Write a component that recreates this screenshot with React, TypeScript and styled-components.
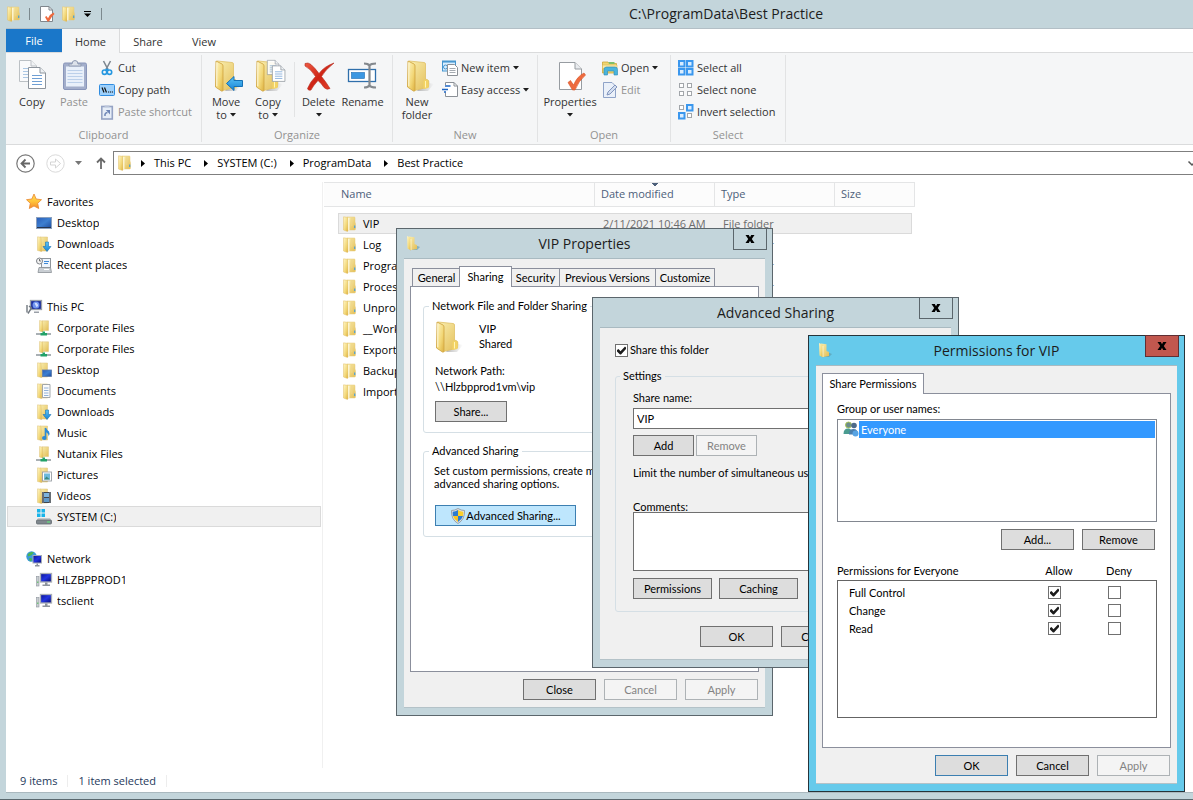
import React, { useState } from "react";
import styled, { createGlobalStyle, css } from "styled-components";

const UI = `"Open Sans", "Noto Sans", sans-serif`;
const DIALOG = `Lato, "Liberation Sans", sans-serif`;

const GlobalStyle = createGlobalStyle`
  *, *::before, *::after { box-sizing: border-box; }
  body { margin: 0; font: 11px/14px ${UI}; color: #000; background: #fff; }
  button, input, textarea { font: inherit; color: inherit; margin: 0; }
  svg { display: block; flex: none; overflow: visible; }
`;

/* ---------- icons ---------- */

const Gradients = () => (
  <svg width="0" height="0" aria-hidden="true">
    <defs>
      <linearGradient id="foldBack" x1="0" y1="0" x2="1" y2="1">
        <stop offset="0" stopColor="#f9eeb0" />
        <stop offset="1" stopColor="#e3bd55" />
      </linearGradient>
      <linearGradient id="foldFront" x1="0" y1="0" x2="1" y2="1">
        <stop offset="0" stopColor="#fff6c6" />
        <stop offset="0.6" stopColor="#f2d777" />
        <stop offset="1" stopColor="#dcaf3e" />
      </linearGradient>
      <linearGradient id="screen" x1="0" y1="0" x2="1" y2="1">
        <stop offset="0" stopColor="#2a5cb8" />
        <stop offset="0.5" stopColor="#3d7fd0" />
        <stop offset="1" stopColor="#1d4a9c" />
      </linearGradient>
      <linearGradient id="deepScreen" x1="0" y1="0" x2="1" y2="1">
        <stop offset="0" stopColor="#0a1290" />
        <stop offset="0.5" stopColor="#2233e0" />
        <stop offset="1" stopColor="#060a70" />
      </linearGradient>
      <linearGradient id="blueArrow" x1="0" y1="0" x2="0" y2="1">
        <stop offset="0" stopColor="#5cc4f6" />
        <stop offset="1" stopColor="#1583d6" />
      </linearGradient>
      <linearGradient id="redX" x1="0" y1="0" x2="1" y2="1">
        <stop offset="0" stopColor="#ee5a43" />
        <stop offset="0.5" stopColor="#cf2415" />
        <stop offset="1" stopColor="#e4432c" />
      </linearGradient>
      <linearGradient id="starFill" x1="0" y1="0" x2="0" y2="1">
        <stop offset="0" stopColor="#ffd75c" />
        <stop offset="0.5" stopColor="#ffc63a" />
        <stop offset="1" stopColor="#f58a2c" />
      </linearGradient>
      <linearGradient id="softShadow" x1="0" y1="0" x2="1" y2="0">
        <stop offset="0" stopColor="#777" stopOpacity="0.5" />
        <stop offset="1" stopColor="#777" stopOpacity="0" />
      </linearGradient>
    </defs>
  </svg>
);

const BigFolderShape = ({ x = 0 }: { x?: number }) => (
  <g transform={`translate(${x} 0)`}>
    <path d="M18 22L28 24L22 31L11 31Z" fill="url(#softShadow)" />
    <path d="M3 1L18 2.500Q19.500 2.600 19.500 4L19.500 19L22 20Q22.800 20.500 22.800 22L22.500 27L8.500 30.500L3 27Z" fill="url(#foldBack)" stroke="#e0c066" strokeWidth="0.800" />
    <path d="M17.500 21Q20 19 22 20.500Q23 24 22.500 28L17.500 29Z" fill="#f3d364" />
    <path d="M19.500 21V27.500" stroke="#fff3b8" strokeWidth="1" />
    <path d="M2 1L8 4Q9 4.500 9 6L9 30Q9 31.500 7.500 31L1.500 27Z" fill="url(#foldFront)" stroke="#d3a846" strokeWidth="0.900" />
    <path d="M2.800 2.500V26" stroke="#fffbe0" strokeWidth="0.900" />
  </g>
);

const Icon32 = ({ children, size = 32 }: { children: React.ReactNode; size?: number }) => (
  <svg width={size} height={size} viewBox="0 0 32 32" fill="none" aria-hidden="true">{children}</svg>
);
const Icon16 = ({ children }: { children: React.ReactNode }) => (
  <svg width="16" height="16" viewBox="0 0 16 16" fill="none" aria-hidden="true">{children}</svg>
);

const BigFolder = ({ x }: { x?: number }) => <Icon32><BigFolderShape x={x} /></Icon32>;

const SmallFolder = () => (
  <Icon16>
    <path d="M5 1H12.500Q13 1 13 2V6L13.500 8V13Q13.500 14 12.500 14H5Z" fill="url(#foldBack)" stroke="#e6c878" strokeWidth="0.5" />
    <path d="M1.500 0.800L5.500 1.300L6 14.500L5.500 15.500L1.500 14Z" fill="url(#foldFront)" stroke="#e0bf68" strokeWidth="0.5" />
    <path d="M6.800 2V14.500" stroke="#fffbe2" strokeWidth="1.200" />
    <path d="M9.800 1.500V10" stroke="#efd68a" strokeWidth="1" />
    <path d="M12.700 9.500V12" stroke="#4b9fd8" strokeWidth="1.200" />
  </Icon16>
);

const TitleFolder = () => (
  <Icon16>
    <path d="M10 10L15 12L12 15H6Z" fill="#5b98a8" opacity="0.6" />
    <path d="M4 1.500L9.500 2.200V9L12 10V14L6 15Z" fill="url(#foldBack)" />
    <path d="M2 1L5.500 2.500L6 15.500L2.500 13.500Z" fill="url(#foldFront)" />
    <path d="M6 4V15" stroke="#fff6d0" strokeWidth="0.8" />
  </Icon16>
);

const HalfFolder = () => (
  <g>
    <path d="M4 1H11.500V15H4Z" fill="url(#foldBack)" stroke="#ddc078" strokeWidth="0.5" />
    <path d="M1.500 0.800L5 1.300L5.800 15.500L1.500 14.500Z" fill="url(#foldFront)" stroke="#ddc078" strokeWidth="0.5" />
  </g>
);

const Page = ({ x, y }: { x: number; y: number }) => (
  <g transform={`translate(${x} ${y})`}>
    <path d="M0.500 0.500H12L17.500 6V21.500H0.500Z" fill="#fff" stroke="#8d949c" />
    <path d="M12 0.500V6H17.500" fill="#eef1f4" stroke="#8d949c" />
    <path d="M4 8.500H14M4 11.500H14M4 14.500H14M4 17.500H14" stroke="#6f9fd4" />
  </g>
);

const CopyIcon = () => (
  <Icon32>
    <g opacity="0.55"><Page x={3} y={0} /></g>
    <Page x={12} y={7} />
  </Icon32>
);

const PasteIcon = () => (
  <Icon32>
    <rect x="5.500" y="3" width="23" height="26.500" rx="1.500" fill="#a3aecb" stroke="#8996ba" />
    <rect x="8" y="6.500" width="18" height="20" fill="#e9f0fa" />
    <path d="M9.500 10.500H24.500M9.500 13.500H24.500M9.500 16.500H24.500M9.500 19.500H24.500M9.500 22.500H24.500" stroke="#bcd0ea" />
    <path d="M11 6V4H14Q14 0.500 17 0.500T20 4H23V6Z" fill="#dde2ea" stroke="#8f9bb2" />
  </Icon32>
);

const CutIcon = () => (
  <Icon16>
    <path d="M4.500 1L9 9.500M11.500 1L7 9.500" stroke="#7d8790" strokeWidth="1.600" />
    <circle cx="5.500" cy="12.200" r="2.200" stroke="#2597e0" strokeWidth="1.600" />
    <circle cx="10.500" cy="12.200" r="2.200" stroke="#2597e0" strokeWidth="1.600" />
    <path d="M6.500 9.500L9.500 9.500" stroke="#2597e0" strokeWidth="1.500" />
  </Icon16>
);

const CopyPathIcon = () => (
  <Icon16>
    <rect x="0.500" y="2.500" width="15" height="11" rx="1" fill="#9dd0fb" stroke="#2f8ce0" />
    <path d="M3 5.500L5 10.500M5.500 5.500L7.500 10.500" stroke="#111" strokeWidth="1.200" />
    <path d="M9 10H10.200M11 10H12.200M13 10H14" stroke="#111" strokeWidth="1.200" />
  </Icon16>
);

const PasteShortcutIcon = () => (
  <Icon16>
    <rect x="2.800" y="2.500" width="10.500" height="12.500" fill="#e6edf7" stroke="#95a3c4" strokeWidth="1.600" />
    <path d="M5.500 3.200V1.500H10.500V3.200Z" fill="#b9c3d8" />
    <path d="M6 12Q5.500 9 8.500 8.500" stroke="#6c84b5" strokeWidth="1.500" />
    <path d="M6.800 6H11V10.500Z" fill="#6c84b5" />
  </Icon16>
);

const MoveToIcon = () => (
  <Icon32>
    <BigFolderShape x={4} />
    <path d="M16.500 23.500L24 16.500V20.500H32.500V26.500H24V30.500Z" fill="url(#blueArrow)" stroke="#1570b5" />
  </Icon32>
);

const CopyToIcon = () => (
  <Icon32>
    <BigFolderShape x={3} />
    <g transform="translate(15 0) scale(0.680)" opacity="0.9"><Page x={0} y={0} /></g>
    <g transform="translate(20 5.500) scale(0.740)"><Page x={0} y={0} /></g>
  </Icon32>
);

const DeleteIcon = () => (
  <Icon32>
    <path d="M2 3.500Q5 2 8 4.500Q12 8 16 13.500Q21 6.500 31 3Q22 10 18.500 16.500Q23 22 27 28.500Q24 30.500 21 27.500Q18 23 15 20.500Q10 26 8 30Q5 31 4.500 28.500Q7 22 12.500 16.500Q8 9 2 6Z" fill="url(#redX)" stroke="#b52a1c" strokeWidth="0.6" />
  </Icon32>
);

const RenameIcon = () => (
  <Icon32>
    <rect x="1.500" y="9.500" width="27" height="12" fill="#fff" stroke="#2f6fab" strokeWidth="1.300" />
    <rect x="4.500" y="12.500" width="13" height="6" fill="#3b97e2" stroke="#1c6cb4" strokeWidth="0.600" />
    <path d="M17 3.500Q21 3.500 22.500 5.500Q24 3.500 29 3.500M17 27.500Q21 27.500 22.500 25.500Q24 27.500 29 27.500M22.500 5V26" stroke="#84898e" strokeWidth="2.200" />
  </Icon32>
);

const NewItemIcon = () => (
  <Icon16>
    <rect x="0.500" y="1" width="13" height="10" fill="#d9efff" stroke="#4495cf" />
    <path d="M1 1.800H13" stroke="#4495cf" strokeWidth="1.500" />
    <circle cx="3.500" cy="7" r="2" stroke="#4495cf" />
    <path d="M5.500 4.500H12.500L15.500 7.500V15.500H5.500Z" fill="#fff" stroke="#8b9096" />
    <path d="M7.500 8.500H13.500M7.500 10.500H13.500M7.500 12.500H13.500" stroke="#a5abb1" />
  </Icon16>
);

const EasyAccessIcon = () => (
  <Icon16>
    <path d="M3.500 0.500H12L15.500 4V14.500H3.500Z" fill="#fff" />
    <path d="M3.500 3V0.500H12L15.500 4V14.500H3.500V10.500" stroke="#8b9096" />
    <path d="M12 0.500V4H15.500" stroke="#8b9096" />
    <path d="M3 4H8.500M0 7.500H6M2 10H4" stroke="#1e66c4" strokeWidth="1.500" />
  </Icon16>
);

const PropertiesIcon = () => (
  <Icon32>
    <path d="M5.500 2.500H21L27.500 9V29.500H5.500Z" fill="#fff" stroke="#979ca1" />
    <path d="M21 2.500V9H27.500" fill="#e9ecef" stroke="#979ca1" />
    <path d="M14 22.500L16.500 20.500L19.500 25Q23.500 16 30 13L31.500 15Q24.500 21 21 30H18.500Z" fill="#ee6b3f" stroke="#d65324" strokeWidth="0.6" />
  </Icon32>
);

const QuickProperties = () => (
  <Icon16>
    <path d="M1.500 0.500H10L13.500 4V15.500H1.500Z" fill="#fff" stroke="#7f868c" />
    <path d="M10 0.500V4H13.500" stroke="#7f868c" />
    <path d="M6 11L7.500 10L9 12.200Q11 8 14.500 6.500L15.500 8Q12 11 10 15.500H8.500Z" fill="#ee6b3f" />
  </Icon16>
);

const OpenIcon = () => (
  <Icon16>
    <path d="M0.500 2H6L7 3.500H14.500V13H0.500Z" fill="#f0d670" stroke="#cda63a" strokeWidth="0.8" />
    <path d="M6.500 2H12.500V4H7Z" fill="#7fbf6a" />
    <path d="M0.500 5H15V8.500H0.500Z" fill="#f9e9a6" stroke="#d9b858" strokeWidth="0.600" />
    <path d="M2 15V9.500Q2 7 4.500 7H13Q15.500 7 15.500 9.500V15H12V11H5.500V15Z" fill="#4ab4dc" stroke="#2a8ab5" strokeWidth="0.6" />
  </Icon16>
);

const EditIcon = () => (
  <Icon16>
    <path d="M1.500 0.500H10L13.500 4V15.500H1.500Z" fill="#eaf0f9" stroke="#8fa3c8" />
    <path d="M5 13L6 10L13 3L15 5L8 12Z" fill="#d3def0" stroke="#8295bd" />
  </Icon16>
);

const Square = ({ x, y, on }: { x: number; y: number; on?: boolean }) =>
  on ? (
    <g>
      <rect x={x} y={y} width="7.500" height="7.500" fill="#3a97ee" />
      <rect x={x + 2} y={y + 2} width="3.500" height="3.500" fill="#d9edff" />
    </g>
  ) : (
    <rect x={x + 1.5} y={y + 1.5} width="4" height="4" fill="#fff" stroke="#a2a6aa" />
  );

const SelectIcon = ({ on }: { on: boolean[] }) => (
  <Icon16>
    <Square x={0} y={0} on={on[0]} />
    <Square x={8} y={0} on={on[1]} />
    <Square x={0} y={8} on={on[2]} />
    <Square x={8} y={8} on={on[3]} />
  </Icon16>
);

const StarIcon = () => (
  <Icon16>
    <path d="M8 0L10.200 5L15.500 5.700L11.700 9.300L12.700 14.500L8 12L3.300 14.500L4.300 9.300L0.500 5.700L5.800 5Z" fill="url(#starFill)" stroke="#e8862e" strokeWidth="0.8" />
  </Icon16>
);

const DesktopIcon = () => (
  <Icon16>
    <rect x="0.500" y="2.500" width="15" height="11" fill="url(#screen)" stroke="#8ba0bd" />
    <path d="M1 12.500H15" stroke="#26344d" />
  </Icon16>
);

const DownloadsIcon = () => (
  <Icon16>
    <HalfFolder />
    <path d="M9.500 6H12.500V10.500H15L11 15.500L7 10.500H9.500Z" fill="url(#blueArrow)" stroke="#1a72b4" strokeWidth="0.6" />
  </Icon16>
);

const RecentIcon = () => (
  <Icon16>
    <rect x="5.500" y="1.500" width="9" height="9" fill="#eef4fb" stroke="#8f959b" />
    <path d="M8 4.500H13M8 6.500H12" stroke="#3c88d6" strokeWidth="1.200" />
    <circle cx="3.500" cy="4" r="3" fill="#f3f3f3" stroke="#7d8288" />
    <path d="M3.500 2V4H5" stroke="#555" strokeWidth="0.800" />
    <path d="M3 10.500H14.500L15.500 15.500H2Z" fill="#c9ced3" stroke="#8a9096" strokeWidth="0.800" />
    <path d="M8 12.500H13" stroke="#fff" />
  </Icon16>
);

const PcIcon = () => (
  <Icon16>
    <rect x="4.500" y="1.500" width="11" height="9" fill="#1a2c9c" stroke="#9aa0a8" strokeWidth="1.300" />
    <circle cx="10" cy="6" r="3.500" fill="#6f93ee" />
    <path d="M8.500 4.500Q10 3 11.500 5T10.500 8Z" fill="#cfdcff" />
    <path d="M8 12.500H13V14H8Z" fill="#9aa0a8" />
    <path d="M1 6V13.500M3 7L5.500 9L2 14.500" stroke="#70777f" strokeWidth="1.400" />
  </Icon16>
);

const NetFolderIcon = () => (
  <Icon16>
    <path d="M6 0.800H12.500V10.500H6Z" fill="url(#foldBack)" stroke="#ddc078" strokeWidth="0.500" />
    <path d="M3.500 0.500L6.500 1.200L7 12L3.500 11Z" fill="url(#foldFront)" stroke="#ddc078" strokeWidth="0.500" />
    <path d="M0 14H15" stroke="#a9b0b4" strokeWidth="2" />
    <path d="M6.500 11.500H9V13H11V15.500H4.500V13H6.500Z" fill="#22a268" />
  </Icon16>
);

const DesktopFolderIcon = () => (
  <Icon16><HalfFolder /><rect x="6.500" y="8" width="9" height="6.500" fill="url(#screen)" stroke="#5c7ba8" strokeWidth="0.8" /></Icon16>
);
const DocumentsIcon = () => (
  <Icon16>
    <HalfFolder />
    <path d="M6.500 1.500H14V14.500H6.500Z" fill="#fbfbfb" stroke="#9a9fa5" strokeWidth="0.9" />
    <path d="M8 5H12.500M8 7.500H12.500M8 10H12.500M8 12.500H12.500" stroke="#86a9d6" strokeWidth="0.9" />
  </Icon16>
);
const MusicIcon = () => (
  <Icon16>
    <HalfFolder />
    <path d="M9.500 3V12.500" stroke="#2b8ad8" strokeWidth="1.600" />
    <ellipse cx="8.300" cy="13" rx="2.300" ry="1.900" fill="#2b8ad8" />
    <path d="M9.500 2.500Q11 5 13 6.500Q14.500 9 12.500 11.500Q13 8.500 9.500 7Z" fill="#2b8ad8" />
  </Icon16>
);
const PicturesIcon = () => (
  <Icon16>
    <HalfFolder />
    <rect x="6.500" y="5" width="9" height="9" fill="#fff" stroke="#9a9fa5" strokeWidth="0.9" />
    <rect x="8" y="6.500" width="6" height="6" fill="#6db9dd" />
    <path d="M8 12.500L10.500 9.500L14 12.500Z" fill="#3b8a80" />
  </Icon16>
);
const VideosIcon = () => (
  <Icon16>
    <HalfFolder />
    <rect x="6" y="4" width="9" height="11" fill="#3f464d" />
    <rect x="8" y="5" width="5" height="4" fill="#7db4dd" />
    <rect x="8" y="10" width="5" height="4" fill="#5f98c8" />
    <path d="M7 4.500V15M14 4.500V15" stroke="#dfe3e6" strokeWidth="1" strokeDasharray="1 1" />
  </Icon16>
);
const DriveIcon = () => (
  <Icon16>
    <path d="M1 0H4.500V3.500H1ZM5.500 0H9V3.500H5.500ZM1 4.500H4.500V8H1ZM5.500 4.500H9V8H5.500Z" fill="#18b4ea" />
    <path d="M2 9H14L15.500 11.500H0.500Z" fill="#c3c8cc" />
    <rect x="0.500" y="11" width="15" height="4" rx="1" fill="#7f878d" stroke="#62696f" strokeWidth="0.800" />
    <path d="M11 13H14" stroke="#5fe07a" strokeWidth="1.200" />
  </Icon16>
);
const NetworkIcon = () => (
  <Icon16>
    <circle cx="5.500" cy="5.500" r="5.200" fill="#3a9ad9" />
    <path d="M2 3Q5 0 8 1.500Q6 4 3.500 5Q1 6 2 3ZM3 7.500Q6 6 6 9L4.500 10.500Q3 9.500 3 7.500Z" fill="#4bb54f" />
    <rect x="7" y="4.500" width="8.500" height="7.500" fill="url(#deepScreen)" stroke="#a3abb5" />
    <path d="M10.500 12.500H12V14H13.500V15.500H9V14H10.500Z" fill="#8d949c" />
  </Icon16>
);
const ComputerIcon = () => (
  <Icon16>
    <rect x="4.500" y="1.500" width="11" height="8.500" fill="url(#deepScreen)" stroke="#a9aeb5" strokeWidth="1.300" />
    <path d="M9 10.500H11.500V12.500H14V14H6.500V12.500H9Z" fill="#8d949c" />
    <rect x="0.500" y="4.500" width="2.500" height="9.500" fill="#c9cdd2" stroke="#8d949c" strokeWidth="0.600" />
    <path d="M1.800 9.500V11" stroke="#4ec455" />
  </Icon16>
);

const ShieldIcon = () => (
  <Icon16>
    <path d="M8 0.500Q11 2.500 14.500 2.500Q15 11.500 8 15.500Q1 11.500 1.500 2.500Q5 2.500 8 0.500Z" fill="#dfe3e6" stroke="#8b8f93" strokeWidth="0.8" />
    <path d="M8 2V8H3Q2.500 6 2.700 3.700Q5.500 3.500 8 2Z" fill="#2d7bd0" />
    <path d="M8 2V8H13Q13.500 6 13.300 3.700Q10.500 3.500 8 2Z" fill="#fbd02d" />
    <path d="M8 14V8H3Q4.200 11.800 8 14Z" fill="#fbc31e" />
    <path d="M8 14V8H13Q11.800 11.800 8 14Z" fill="#2d7bd0" />
  </Icon16>
);

const PeopleIcon = () => (
  <Icon16>
    <circle cx="5.500" cy="4" r="3" fill="#6d8c8b" stroke="#a9c64e" strokeWidth="0.9" />
    <path d="M0.500 13Q0.500 7.500 5 7.500T9 13Z" fill="#4b9c90" />
    <circle cx="11" cy="4.500" r="2.800" fill="#4e6b8a" />
    <path d="M6 13.500Q6 8 10.500 8T15 13.500Z" fill="#4b7fae" />
    <circle cx="12.500" cy="12.500" r="3" fill="#58a4e4" />
  </Icon16>
);

const Caret = ({ color = "#1e1e1e" }: { color?: string }) => (
  <svg width="6" height="4" viewBox="0 0 6 4" aria-hidden="true"><path d="M0 0H6L3 3.500Z" fill={color} /></svg>
);

const CloseGlyph = () => (
  <svg width="10" height="8" viewBox="0 0 10 8" aria-hidden="true">
    <path d="M0.500 0H3.800L5 2.200L6.200 0H9.500L6.800 4L9.500 8H6.200L5 5.800L3.800 8H0.500L3.200 4Z" fill="#000" />
  </svg>
);

/* ---------- explorer window ---------- */

const Desktop = styled.div`
  position: relative;
  min-height: 100vh;
  display: flex;
  flex-direction: column;
  overflow: hidden;
  padding: 0 0 6px 6px;
  background: #c3d5db;
  border-bottom: 1px solid #5a686e;
`;

const TitleBar = styled.header`
  display: flex;
  align-items: center;
  height: 28px;
`;

const QuickAccess = styled.div`
  flex: 0 0 253px;
  display: flex;
  align-items: center;
`;

const QuickButton = styled.button<{ $ml?: number }>`
  display: flex;
  border: 0;
  padding: 0;
  background: none;
  margin-left: ${(p) => p.$ml ?? 0}px;
`;

const QuickRule = styled.span<{ $ml: number }>`
  width: 1px;
  height: 12px;
  margin-left: ${(p) => p.$ml}px;
  background: #7c898e;
`;

const WindowTitle = styled.h1`
  flex: 1;
  margin: 0;
  text-align: center;
  font-size: 14px;
  line-height: 20px;
  font-weight: 400;
  color: #1c1c1c;
`;

const TabStrip = styled.nav`
  display: flex;
  height: 25px;
  background: #fff;
  border-top: 1px solid #b3bfc6;
  border-bottom: 1px solid #dadbdc;
`;

const RibbonTab = styled.button<{ $kind?: "file" | "active"; $w: number }>`
  width: ${(p) => p.$w}px;
  border: 0;
  padding: 2px 0 0;
  background: none;
  color: #333;
  ${(p) => p.$kind === "file" && css`background: #1a77c9; color: #fff; padding: 0;`}
  ${(p) => p.$kind === "active" && css`
    background: #f5f6f7;
    border-right: 1px solid #dadbdc;
    margin-bottom: -1px;
  `}
`;

const Ribbon = styled.section`
  display: flex;
  height: 92px;
  padding: 2px 0;
  background: #f5f6f7;
  border-bottom: 1px solid #dadbdc;
`;

const Group = styled.div<{ $w: number; $pad: number }>`
  flex: 0 0 ${(p) => p.$w}px;
  display: flex;
  flex-direction: column;
  padding-top: 2px;
  border-right: 1px solid #e2e3e4;
  > div { padding-left: ${(p) => p.$pad}px; }
`;

const GroupBody = styled.div`
  display: flex;
  height: 66px;
`;

const GroupLabel = styled.span`
  margin-top: 5px;
  text-align: center;
  color: #929292;
`;

const LargeButton = styled.button<{ $w: number }>`
  flex: 0 0 ${(p) => p.$w}px;
  display: flex;
  flex-direction: column;
  align-items: center;
  padding: 3px 0 0;
  border: 0;
  background: none;
  color: #333;
  &:disabled { color: #929292; }
`;

const LargeLabel = styled.span`
  margin-top: 3px;
  line-height: 13px;
  white-space: nowrap;
`;

const SecondLine = styled.span`
  display: flex;
  align-items: center;
  gap: 3px;
  height: 13px;
  line-height: 13px;
`;

const SmallColumn = styled.div`
  display: flex;
  flex-direction: column;
  padding-left: 4px;
`;

const SmallButton = styled.button`
  display: flex;
  align-items: center;
  gap: 3px;
  height: 22px;
  padding: 0;
  border: 0;
  background: none;
  color: #333;
  white-space: nowrap;
  &:disabled { color: #929292; }
`;

const InnerRule = styled.span`
  width: 1px;
  margin: 5px 2px 6px 5px;
  background: #e2e3e4;
`;

const AddressRow = styled.div`
  display: flex;
  align-items: center;
  height: 37px;
  padding: 0 0 1px 10px;
  background: #fff;
`;

const PlainButton = styled.button<{ $mr: number }>`
  display: flex;
  padding: 0;
  border: 0;
  background: none;
  margin-right: ${(p) => p.$mr}px;
`;

const AddressBox = styled.div`
  flex: 1;
  display: flex;
  align-items: center;
  height: 24px;
  padding-left: 3px;
  border: 1px solid #7f7f7f;
  border-right: 0;
`;

const Crumb = styled.a`
  display: flex;
  align-items: center;
  gap: 9px;
  margin-left: 8px;
  color: #000;
  text-decoration: none;
  & + & { margin-left: 13px; }
`;

const AddressChevron = styled.svg`
  margin-left: auto;
  margin-right: -3px;
`;

const Body = styled.div`
  flex: 1;
  display: flex;
  background: #fff;
`;

const NavPane = styled.nav`
  flex: 0 0 317px;
  padding: 9px 1px 0;
  border-right: 1px solid #f0f0f0;
`;

const NavSection = styled.section`
  margin-bottom: 21px;
`;

const NavItem = styled.a<{ $top?: boolean; $active?: boolean; $clip?: boolean }>`
  display: flex;
  align-items: center;
  gap: 5px;
  height: 21px;
  padding-left: ${(p) => (p.$top ? 18 : 28)}px;
  border: 1px solid ${(p) => (p.$active ? "#dadada" : "transparent")};
  background: ${(p) => (p.$active ? "#f0f0f0" : "none")};
  color: #000;
  text-decoration: none;
  span { overflow: hidden; white-space: nowrap; ${(p) => p.$clip && "width: 68px;"} }
`;

const FileTable = styled.table`
  display: block;
  flex: 1;
  min-width: 0;
  thead { display: block; }
  tr {
    display: grid;
    grid-template-columns: 271px 120px 120px 80px;
    align-items: center;
    width: max-content;
  }
  tbody { display: block; padding-top: 6px; }
  tbody td { padding: 0 0 0 7px; color: #6d6d6d; }
  tbody td:first-child {
    display: flex;
    align-items: center;
    gap: 5px;
    padding-left: 3px;
    color: #000;
  }
`;

const HeadRow = styled.tr`
  height: 25px;
  margin-left: 1px;
  background: #fcfcfc;
  border-top: 1px solid #e4e5e6;
  border-bottom: 1px solid #e4e5e6;
`;

const HeadCell = styled.th<{ $first?: boolean; $sorted?: boolean }>`
  height: 100%;
  padding: 4px 0 0 ${(p) => (p.$first ? 17 : 6)}px;
  border-right: 1px solid #e4e5e6;
  text-align: left;
  font-weight: 400;
  color: #4c607a;
  ${(p) => p.$sorted && css`
    background: linear-gradient(#4c607a, #4c607a) no-repeat 59px 0 / 2px 3px,
      linear-gradient(#4c607a, #4c607a) no-repeat 58px 0 / 4px 2px,
      linear-gradient(#4c607a, #4c607a) no-repeat 57px 0 / 6px 1px;
  `}
`;

const FileRow = styled.tr<{ $active?: boolean }>`
  && { grid-template-columns: 257px 120px 120px 75px; }
  height: 21px;
  margin-left: 15px;
  border: 1px solid ${(p) => (p.$active ? "#dadada" : "transparent")};
  background: ${(p) => (p.$active ? "#f0f0f0" : "none")};
`;

const StatusBar = styled.footer`
  display: flex;
  align-items: center;
  height: 25px;
  padding: 1px 0 0 14px;
  background: #fff;
  border-bottom: 1px solid #aab9bf;
  color: #1e395b;
  span + span { margin-left: 10px; }
  span { padding-right: 10px; border-right: 1px solid #ededed; line-height: 12px; }
`;

/* ---------- dialogs ---------- */

const Dialog = styled.section<{ $x: number; $y: number; $w: number; $h: number; $focused?: boolean }>`
  position: absolute;
  left: ${(p) => p.$x}px;
  top: ${(p) => p.$y}px;
  width: ${(p) => p.$w}px;
  min-height: ${(p) => p.$h}px;
  display: flex;
  flex-direction: column;
  padding: 0 7px 7px;
  border: 1px solid ${(p) => (p.$focused ? "#26343a" : "#5b666c")};
  background: ${(p) => (p.$focused ? "#66caeb" : "#c3d5db")};
  font: 11px/14px ${DIALOG};
  color: #000;
`;

const DialogTitle = styled.header`
  position: relative;
  display: flex;
  align-items: center;
  height: 29px;
  h2 {
    flex: 1;
    margin: 0;
    font: 400 14px/20px ${UI};
    text-align: center;
    color: #1c1c1c;
  }
`;

const TitleIcon = styled.span`
  position: absolute;
  left: 1px;
  top: 6px;
`;

const CloseButton = styled.button<{ $focused?: boolean }>`
  position: absolute;
  right: -2px;
  top: -1px;
  width: 34px;
  height: 22px;
  display: flex;
  align-items: center;
  justify-content: center;
  padding: 0;
  border: 1px solid ${(p) => (p.$focused ? "#5f2f34" : "#5b666c")};
  background: ${(p) => (p.$focused ? "#c1574e" : "none")};
`;

const Client = styled.div`
  flex: 1;
  display: flex;
  flex-direction: column;
  padding: 7px 6px 7px;
  border-top: 1px solid #a9bac1;
  border-bottom: 1px solid #b4c2c8;
  background: #f0f0f0;
`;

const Tabs = styled.div`
  display: flex;
  align-items: flex-end;
  height: 20px;
  padding-left: 2px;
`;

const Tab = styled.button<{ $w: number; $active?: boolean }>`
  width: ${(p) => p.$w}px;
  height: 18px;
  padding: 0;
  border: 1px solid #8b8f9c;
  border-bottom: 0;
  margin-right: -1px;
  background: #f0f0f0;
  white-space: nowrap;
  ${(p) => p.$active && css`
    height: 21px;
    padding-bottom: 1px;
    margin-bottom: -1px;
    margin-left: -1px;
    background: #fff;
    z-index: 1;
    &:first-child { margin-left: -2px; }
  `}
`;

const Panel = styled.div`
  flex: 1;
  display: flex;
  flex-direction: column;
  border: 1px solid #8b8f9c;
  background: #fff;
`;

const GroupBox = styled.fieldset<{ $inset: number }>`
  min-width: 0;
  margin: 0;
  border: 1px solid #d5dfe5;
  border-radius: 3px;
  legend { margin-left: ${(p) => -p.$inset}px; padding: 0 3px; }
`;

const Push = styled.button<{ $w: number; $tone?: "hot" | "default" }>`
  width: ${(p) => p.$w}px;
  height: 21px;
  display: flex;
  flex: none;
  align-items: center;
  justify-content: center;
  padding: 0;
  border: 1px solid ${(p) => (p.$tone ? "#3c7fb1" : "#707070")};
  background: ${(p) => (p.$tone === "hot" ? "#bee6fd" : "#dddddd")};
  &:disabled { border-color: #adb2b5; background: #f4f4f4; color: #838383; }
`;

const ButtonRow = styled.div<{ $gap?: number; $mt?: number; $end?: boolean; $mr?: number }>`
  display: flex;
  gap: ${(p) => p.$gap ?? 8}px;
  margin-top: ${(p) => p.$mt ?? 0}px;
  margin-right: ${(p) => p.$mr ?? 0}px;
  ${(p) => p.$end && "justify-content: flex-end;"}
`;

const SharePanel = styled(Panel)`
  padding: 12px;
  gap: 11px;
`;

const ShareFields = styled(GroupBox)`
  padding: 8px 11px 10px;
`;

const ShareSummary = styled.div`
  display: flex;
  gap: 12px;
  height: 42px;
  p { margin: 0; line-height: 15px; }
`;

const Path = styled.p`
  margin: 0 0 6px;
  line-height: 16px;
`;

const AdvancedFields = styled(GroupBox)`
  padding: 6px 11px 10px;
  p { margin: 0 0 15px -1px; line-height: 13px; white-space: nowrap; }
`;

const CheckCell = styled.span`
  display: inline-grid;
  width: 13px;
  height: 13px;
  > * { grid-area: 1 / 1; }
  svg { place-self: center; pointer-events: none; visibility: hidden; }
  input:checked + svg { visibility: visible; }
`;

const CheckInput = styled.input`
  appearance: none;
  width: 13px;
  height: 13px;
  border: 1px solid #707070;
  background: #fff;
`;

const CheckLabel = styled.label`
  display: flex;
  align-items: center;
  gap: 2px;
  margin: 8px 0 12px 9px;
`;

const SettingsBox = styled(GroupBox)`
  margin: 0 9px 14px 9px;
  padding: 8px 17px 12px;
`;

const FieldLabel = styled.label`
  display: block;
  white-space: nowrap;
`;

const TextField = styled.input`
  display: block;
  width: 100%;
  height: 21px;
  margin: 3px 0 6px;
  padding: 0 3px;
  border: 1px solid #707070;
  background: #fff;
`;

const Comments = styled.textarea`
  display: block;
  width: 100%;
  height: 59px;
  margin-top: -2px;
  resize: none;
  padding: 3px;
  border: 1px solid #707070;
  background: #fff;
`;

const Limit = styled.p`
  margin: 10px 0 20px;
  white-space: nowrap;
`;

const PermPanel = styled(Panel)`
  padding: 8px 13px 29px 14px;
`;

const UserList = styled.ul`
  height: 103px;
  margin: 3px 0 7px;
  padding: 1px;
  border: 1px solid #828790;
  list-style: none;
`;

const UserItem = styled.li`
  display: flex;
  padding-left: 4px;
  span { flex: 1; padding: 2px; line-height: 14px; height: 17px; background: #3399ff; color: #fff; }
`;

const PermTable = styled.table`
  display: flex;
  flex-direction: column;
  flex: 1;
  margin-top: 14px;
  thead { display: block; }
  tbody { display: block; flex: 1; padding: 3px 0; border: 1px solid #646464; }
  tr { display: grid; grid-template-columns: 1fr 60px 60px; align-items: center; padding-right: 12px; }
  th { padding: 0 0 2px; font-weight: 400; text-align: center; }
  thead tr { padding-right: 8px; }
  thead th:first-child { text-align: left; }
  td, tbody th { height: 18px; padding: 0; text-align: center; line-height: 0; }
  td { padding-top: 2px; }
  tbody th { padding-left: 11px; text-align: left; line-height: 18px; }
`;

/* ---------- pieces ---------- */

const Check = ({ checked, label, id }: { checked: boolean; label?: string; id?: string }) => {
  const [on, setOn] = useState(checked);
  return (
    <CheckCell>
      <CheckInput type="checkbox" id={id} aria-label={label} checked={on} onChange={() => setOn(!on)} />
      <svg width="9" height="9" viewBox="0 0 9 9" aria-hidden="true">
        <path d="M0 4L1.500 3L3.500 5.200L8 0.500L9 1.500V3L4 8.500H3L0 5.500Z" fill="#1b1b1b" />
      </svg>
    </CheckCell>
  );
};

const Large = ({ icon, label, second, caret, w = 42, disabled }: {
  icon: React.ReactNode; label: string; second?: string; caret?: boolean; w?: number; disabled?: boolean;
}) => (
  <LargeButton $w={w} disabled={disabled}>
    {icon}
    <LargeLabel>{label}</LargeLabel>
    {(second || caret) && <SecondLine>{second}{caret && <Caret />}</SecondLine>}
  </LargeButton>
);

const Small = ({ icon, label, caret, disabled }: {
  icon: React.ReactNode; label: string; caret?: boolean; disabled?: boolean;
}) => (
  <SmallButton disabled={disabled}>{icon}{label}{caret && <Caret />}</SmallButton>
);

const DialogFrame = ({ title, icon, focused, x, y, w, h, children }: {
  title: string; icon?: boolean; focused?: boolean; x: number; y: number; w: number; h: number; children: React.ReactNode;
}) => (
  <Dialog role="dialog" aria-label={title} $x={x} $y={y} $w={w} $h={h} $focused={focused}>
    <DialogTitle>
      {icon && <TitleIcon><TitleFolder /></TitleIcon>}
      <h2>{title}</h2>
      <CloseButton aria-label="Close window" $focused={focused}><CloseGlyph /></CloseButton>
    </DialogTitle>
    <Client>{children}</Client>
  </Dialog>
);

const files = ["VIP", "Log", "Programs", "Processed", "Unprocessed", "__Work", "Export", "Backup", "Import"];

const navigation = [
  { head: "Favorites", icon: <StarIcon />, items: [
    ["Desktop", <DesktopIcon />], ["Downloads", <DownloadsIcon />], ["Recent places", <RecentIcon />],
  ] },
  { head: "This PC", icon: <PcIcon />, items: [
    ["Corporate Files", <NetFolderIcon />], ["Corporate Files", <NetFolderIcon />], ["Desktop", <DesktopFolderIcon />],
    ["Documents", <DocumentsIcon />], ["Downloads", <DownloadsIcon />], ["Music", <MusicIcon />],
    ["Nutanix Files", <NetFolderIcon />], ["Pictures", <PicturesIcon />], ["Videos", <VideosIcon />],
    ["SYSTEM (C:)", <DriveIcon />],
  ] },
  { head: "Network", icon: <NetworkIcon />, items: [
    ["HLZBPPROD1", <ComputerIcon />], ["tsclient", <ComputerIcon />],
  ] },
] as { head: string; icon: React.ReactNode; items: [string, React.ReactNode][] }[];

const crumbs = ["This PC", "SYSTEM (C:)", "ProgramData", "Best Practice"];

export default function App() {
  return (
    <Desktop>
      <GlobalStyle />
      <TitleBar>
        <QuickAccess>
          <Gradients />
          <SmallFolder />
          <QuickRule $ml={7} />
          <QuickButton $ml={9} aria-label="Properties"><QuickProperties /></QuickButton>
          <QuickButton $ml={6} aria-label="New folder"><SmallFolder /></QuickButton>
          <QuickButton $ml={7} aria-label="Customize toolbar">
            <svg width="7" height="6" viewBox="0 0 7 6"><path d="M0 0H7V1H0ZM0 2.500H7L3.500 6Z" fill="#000" /></svg>
          </QuickButton>
          <QuickRule $ml={10} />
        </QuickAccess>
        <WindowTitle>C:\ProgramData\Best Practice</WindowTitle>
      </TitleBar>

      <TabStrip aria-label="Ribbon tabs">
        <RibbonTab $kind="file" $w={56}>File</RibbonTab>
        <RibbonTab $kind="active" $w={58}>Home</RibbonTab>
        <RibbonTab $w={56}>Share</RibbonTab>
        <RibbonTab $w={56}>View</RibbonTab>
      </TabStrip>

      <Ribbon>
        <Group $w={196} $pad={5}>
          <GroupBody>
            <Large icon={<CopyIcon />} label="Copy" />
            <Large icon={<PasteIcon />} label="Paste" disabled />
            <SmallColumn>
              <Small icon={<CutIcon />} label="Cut" />
              <Small icon={<CopyPathIcon />} label="Copy path" />
              <Small icon={<PasteShortcutIcon />} label="Paste shortcut" disabled />
            </SmallColumn>
          </GroupBody>
          <GroupLabel>Clipboard</GroupLabel>
        </Group>
        <Group $w={191} $pad={3}>
          <GroupBody>
            <Large icon={<MoveToIcon />} label="Move" second="to" caret />
            <Large icon={<CopyToIcon />} label="Copy" second="to" caret />
            <InnerRule />
            <Large icon={<DeleteIcon />} label="Delete" caret w={43} />
            <Large icon={<RenameIcon />} label="Rename" w={45} />
          </GroupBody>
          <GroupLabel>Organize</GroupLabel>
        </Group>
        <Group $w={145} $pad={3}>
          <GroupBody>
            <Large icon={<BigFolder x={5} />} label="New" second="folder" />
            <SmallColumn>
              <Small icon={<NewItemIcon />} label="New item" caret />
              <Small icon={<EasyAccessIcon />} label="Easy access" caret />
            </SmallColumn>
          </GroupBody>
          <GroupLabel>New</GroupLabel>
        </Group>
        <Group $w={133} $pad={4}>
          <GroupBody>
            <Large icon={<PropertiesIcon />} label="Properties" caret w={56} />
            <SmallColumn>
              <Small icon={<OpenIcon />} label="Open" caret />
              <Small icon={<EditIcon />} label="Edit" disabled />
            </SmallColumn>
          </GroupBody>
          <GroupLabel>Open</GroupLabel>
        </Group>
        <Group $w={115} $pad={3}>
          <GroupBody>
            <SmallColumn>
              <Small icon={<SelectIcon on={[true, true, true, true]} />} label="Select all" />
              <Small icon={<SelectIcon on={[false, false, false, false]} />} label="Select none" />
              <Small icon={<SelectIcon on={[false, true, true, false]} />} label="Invert selection" />
            </SmallColumn>
          </GroupBody>
          <GroupLabel>Select</GroupLabel>
        </Group>
      </Ribbon>

      <AddressRow>
        <PlainButton $mr={11} aria-label="Back">
          <svg width="19" height="19" viewBox="0 0 19 19" fill="none">
            <circle cx="9.500" cy="9.500" r="8.700" stroke="#777" strokeWidth="1.200" />
            <path d="M14 9.500H6M9.500 5.500L5.500 9.500L9.500 13.500" stroke="#666" strokeWidth="1.800" />
          </svg>
        </PlainButton>
        <PlainButton $mr={10} aria-label="Forward">
          <svg width="19" height="19" viewBox="0 0 19 19" fill="none">
            <circle cx="9.500" cy="9.500" r="8.700" stroke="#dadada" />
            <path d="M4.500 8H9.500V5L14.500 9.500L9.500 14V11H4.500Z" stroke="#d4d4d4" />
          </svg>
        </PlainButton>
        <PlainButton $mr={14} aria-label="Recent locations">
          <svg width="7" height="4" viewBox="0 0 7 4"><path d="M0 0H7L3.500 4Z" fill="#777" /></svg>
        </PlainButton>
        <PlainButton $mr={7} aria-label="Up">
          <svg width="10" height="12" viewBox="0 0 10 12" fill="none">
            <path d="M5 12V2M1 5.500L5 1.500L9 5.500" stroke="#6a6a6a" strokeWidth="1.800" />
          </svg>
        </PlainButton>
        <AddressBox>
          <SmallFolder />
          {crumbs.map((name) => (
            <Crumb key={name} href="#">
              <svg width="4" height="7" viewBox="0 0 4 7"><path d="M0 0V7L4 3.500Z" fill="#000" /></svg>
              {name}
            </Crumb>
          ))}
          <AddressChevron width="8" height="5" viewBox="0 0 8 5" fill="none">
            <path d="M0.500 0.500L4 4L7.500 0.500" stroke="#555" strokeWidth="1.500" />
          </AddressChevron>
        </AddressBox>
      </AddressRow>

      <Body>
        <NavPane aria-label="Folders">
          {navigation.map((section) => (
            <NavSection key={section.head}>
              <NavItem href="#" $top>{section.icon}<span>{section.head}</span></NavItem>
              {section.items.map(([name, icon], i) => (
                <NavItem key={i} href="#" $active={name === "SYSTEM (C:)"} $clip={name === "HLZBPPROD1"}>
                  {icon}<span>{name}</span>
                </NavItem>
              ))}
            </NavSection>
          ))}
        </NavPane>
        <FileTable>
          <thead>
            <HeadRow>
              <HeadCell $first>Name</HeadCell>
              <HeadCell $sorted>Date modified</HeadCell>
              <HeadCell>Type</HeadCell>
              <HeadCell>Size</HeadCell>
            </HeadRow>
          </thead>
          <tbody>
            {files.map((name, i) => (
              <FileRow key={name} $active={i === 0}>
                <td><SmallFolder />{name}</td>
                <td>{i === 0 ? "2/11/2021 10:46 AM" : ""}</td>
                <td>File folder</td>
                <td />
              </FileRow>
            ))}
          </tbody>
        </FileTable>
      </Body>
      <StatusBar><span>9 items</span><span>1 item selected</span></StatusBar>

      <DialogFrame title="VIP Properties" icon x={396} y={228} w={377} h={488}>
        <Tabs>
          <Tab $w={49}>General</Tab>
          <Tab $w={53} $active>Sharing</Tab>
          <Tab $w={49}>Security</Tab>
          <Tab $w={97}>Previous Versions</Tab>
          <Tab $w={60}>Customize</Tab>
        </Tabs>
        <SharePanel>
          <ShareFields $inset={6}>
            <legend>Network File and Folder Sharing</legend>
            <ShareSummary>
              <BigFolder />
              <div><p>VIP</p><p>Shared</p></div>
            </ShareSummary>
            <Path>Network Path:<br />\\Hlzbpprod1vm\vip</Path>
            <Push $w={72}>Share...</Push>
          </ShareFields>
          <AdvancedFields $inset={6}>
            <legend>Advanced Sharing</legend>
            <p>Set custom permissions, create multiple shares, and set other<br />advanced sharing options.</p>
            <Push $w={141} $tone="hot"><ShieldIcon />Advanced Sharing...</Push>
          </AdvancedFields>
        </SharePanel>
        <ButtonRow $mt={7} $end $mr={1}>
          <Push $w={73}>Close</Push>
          <Push $w={73} disabled>Cancel</Push>
          <Push $w={73} disabled>Apply</Push>
        </ButtonRow>
      </DialogFrame>

      <DialogFrame title="Advanced Sharing" x={592} y={297} w={367} h={371}>
        <CheckLabel><Check checked id="share-folder" /><span>Share this folder</span></CheckLabel>
        <SettingsBox $inset={13}>
          <legend>Settings</legend>
          <FieldLabel htmlFor="share-name">Share name:</FieldLabel>
          <TextField id="share-name" defaultValue="VIP" />
          <ButtonRow $gap={2}>
            <Push $w={61}>Add</Push>
            <Push $w={61} disabled>Remove</Push>
          </ButtonRow>
          <Limit>Limit the number of simultaneous users to:</Limit>
          <FieldLabel htmlFor="comments">Comments:</FieldLabel>
          <Comments id="comments" />
          <ButtonRow $gap={7} $mt={7}>
            <Push $w={79}>Permissions</Push>
            <Push $w={79}>Caching</Push>
          </ButtonRow>
        </SettingsBox>
        <ButtonRow $end $mr={10}>
          <Push $w={73}>OK</Push>
          <Push $w={73}>Cancel</Push>
          <Push $w={73} disabled>Apply</Push>
        </ButtonRow>
      </DialogFrame>

      <DialogFrame title="Permissions for VIP" icon focused x={808} y={335} w={377} h={457}>
        <Tabs><Tab $w={102} $active>Share Permissions</Tab></Tabs>
        <PermPanel>
          <div>Group or user names:</div>
          <UserList>
            <UserItem><PeopleIcon /><span>Everyone</span></UserItem>
          </UserList>
          <ButtonRow $end $mr={2}>
            <Push $w={73}>Add...</Push>
            <Push $w={73}>Remove</Push>
          </ButtonRow>
          <PermTable>
            <thead>
              <tr><th>Permissions for Everyone</th><th>Allow</th><th>Deny</th></tr>
            </thead>
            <tbody>
              {["Full Control", "Change", "Read"].map((name) => (
                <tr key={name}>
                  <th>{name}</th>
                  <td><Check checked label={`Allow ${name}`} /></td>
                  <td><Check checked={false} label={`Deny ${name}`} /></td>
                </tr>
              ))}
            </tbody>
          </PermTable>
        </PermPanel>
        <ButtonRow $mt={7} $end $mr={1}>
          <Push $w={73} $tone="default">OK</Push>
          <Push $w={73}>Cancel</Push>
          <Push $w={73} disabled>Apply</Push>
        </ButtonRow>
      </DialogFrame>
    </Desktop>
  );
}
